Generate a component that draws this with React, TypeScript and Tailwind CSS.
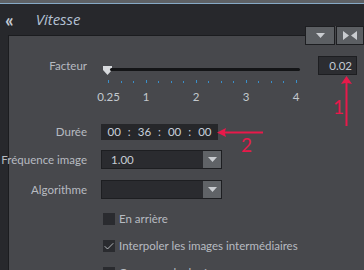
import { Check } from "lucide-react";

const ticks = Array.from({ length: 16 }, (_, i) => 0.25 + i * 0.25);
const scaleLabels = [
  { v: 0.25, t: "0.25" },
  { v: 1, t: "1" },
  { v: 2, t: "2" },
  { v: 3, t: "3" },
  { v: 4, t: "4" },
];

// slider geometry: 0.25 sits at 7px, 1 step = 50px
const pos = (v: number) => 7 + (v - 0.25) * 50;

function DownTriangle() {
  return (
    <svg width="9" height="5" viewBox="0 0 9 5">
      <path d="M0 0 H9 L4.5 5 Z" fill="#c9ccd0" />
    </svg>
  );
}

function Dropdown({ value }: { value: string }) {
  return (
    <div className="flex h-[19px] w-[121px] border border-[#1d1e21] bg-[#2a2b2f]">
      <div className="flex-1 pl-[9px] text-[11.5px] leading-[17px] text-[#c6ccd4]">{value}</div>
      <div className="flex w-[18px] items-center justify-center bg-[#606367]">
        <DownTriangle />
      </div>
    </div>
  );
}

function Box({ checked, label }: { checked?: boolean; label: string }) {
  return (
    <div className="flex items-center gap-[4px]">
      <div className="flex h-[12px] w-[12px] shrink-0 items-center justify-center bg-[#2a2b2f]">
        {checked && <Check size={13} strokeWidth={1.6} color="#d6d9dd" />}
      </div>
      <span className="text-[11.5px] leading-[14px] text-[#b7bbc1]">{label}</span>
    </div>
  );
}

function Label({ children }: { children: string }) {
  return (
    <div className="flex w-[78px] shrink-0 justify-end whitespace-nowrap text-[11.5px] leading-[14px] text-[#b7bbc1]">
      {children}
    </div>
  );
}

export default function App() {
  return (
    <div
      className="relative h-[270px] w-[364px] overflow-hidden bg-[#27282c]"
      style={{ fontFamily: 'Lato, "Open Sans", sans-serif' }}
    >
      <div className="h-[3px] bg-[#5e6165]" />
      <div className="h-px bg-[#86a9c6]" />

      {/* header */}
      <div className="flex h-[31px] items-center">
        <span className="ml-[5px] text-[19px] font-bold leading-none text-[#c3cad3]">«</span>
        <span
          className="ml-[22px] text-[15px] italic text-[#b3c0d3]"
          style={{ fontFamily: '"Open Sans", sans-serif' }}
        >
          Vitesse
        </span>
      </div>

      <div className="flex">
        <div className="w-[8px] shrink-0" />
        <div className="relative h-[240px] min-w-0 flex-1 border-l border-t border-[#1b1c1f] bg-[#47484c]">
          {/* top right buttons */}
          <div className="absolute -top-[10px] right-0 flex gap-[1px] bg-[#47484c]">
            <div className="flex h-[19px] w-[30px] items-center justify-center border border-[#1d1e21] bg-[#5c5f63]">
              <DownTriangle />
            </div>
            <div className="flex h-[19px] w-[28px] items-center justify-center border border-[#1d1e21] bg-[#5c5f63]">
              <svg width="14" height="9" viewBox="0 0 14 9">
                <path d="M0 0 L6 4.5 L0 9 Z M14 0 L8 4.5 L14 9 Z" fill="#c9ccd0" />
              </svg>
            </div>
          </div>

          {/* Facteur */}
          <div className="mt-[20px] flex">
            <div className="pt-[3px]">
              <Label>Facteur</Label>
            </div>
            <div className="relative ml-[14px] w-[200px] shrink-0">
              <div className="absolute left-[2px] top-[10px] h-[8px] w-[9px]">
                <svg width="9" height="9" viewBox="0 0 9 9">
                  <path d="M0 0 H9 V4 L4.5 9 L0 4 Z" fill="#d8dadd" />
                </svg>
              </div>
              <div className="absolute left-[9px] top-[12px] h-[3px] w-[190px] rounded-full bg-[#141517]" />
              {ticks.map((v) => (
                <div
                  key={v}
                  className="absolute w-px bg-[#3a8fc9]"
                  style={{
                    left: pos(v),
                    top: Number.isInteger(v) || v === 0.25 ? 24 : 25,
                    height: Number.isInteger(v) || v === 0.25 ? 3 : 2,
                  }}
                />
              ))}
              {scaleLabels.map((l) => (
                <span
                  key={l.t}
                  className="absolute -translate-x-1/2 text-[11.5px] leading-[12px] text-[#c3c8ce]"
                  style={{ left: pos(l.v) + 0.5, top: 35 }}
                >
                  {l.t}
                </span>
              ))}
            </div>
            <div className="ml-[17px] h-[19px] w-[39px] shrink-0 border border-[#1d1e21] bg-[#2c2d31] pr-[4px] text-right text-[11.5px] leading-[17px] text-[#c3cad3]">
              0.02
            </div>
          </div>

          {/* Durée */}
          <div className="mt-[49px] flex items-center">
            <Label>Durée</Label>
            <div className="ml-[14px] flex h-[16px] w-[117px] items-center justify-center gap-[7px] bg-[#26272a] text-[11.5px] text-[#c6d0dc]">
              <span>00</span>
              <span>:</span>
              <span>36</span>
              <span>:</span>
              <span>00</span>
              <span>:</span>
              <span>00</span>
            </div>
          </div>

          {/* Fréquence image */}
          <div className="mt-[10px] flex items-center">
            <Label>Fréquence image</Label>
            <div className="ml-[14px]">
              <Dropdown value="1.00" />
            </div>
          </div>

          {/* Algorithme */}
          <div className="mt-[11px] flex items-center">
            <Label>Algorithme</Label>
            <div className="ml-[14px]">
              <Dropdown value="" />
            </div>
          </div>

          <div className="ml-[94px] mt-[13px] flex flex-col gap-[13px]">
            <Box label="En arrière" />
            <Box checked label="Interpoler les images intermédiaires" />
            <Box label="Conserver la durée" />
          </div>
        </div>
      </div>

      {/* annotation 1 */}
      <div className="absolute left-[340px] top-[76px]">
        <svg width="13" height="50" viewBox="0 0 13 50">
          <path d="M6.5 0 L12 8 L7.5 7 V50 H5.5 V7 L1 8 Z" fill="#e8194a" />
        </svg>
      </div>
      <span className="absolute left-[333px] top-[95px] text-[19px] leading-[24px] text-[#e8194a]">1</span>

      {/* annotation 2 */}
      <div className="absolute left-[217px] top-[127px]">
        <svg width="46" height="11" viewBox="0 0 46 11">
          <path d="M0 5.5 L9 1 L8 4.5 H46 V6.5 H8 L9 10 Z" fill="#e8194a" />
        </svg>
      </div>
      <span className="absolute left-[241px] top-[133px] text-[19px] leading-[24px] text-[#e8194a]">2</span>
    </div>
  );
}
